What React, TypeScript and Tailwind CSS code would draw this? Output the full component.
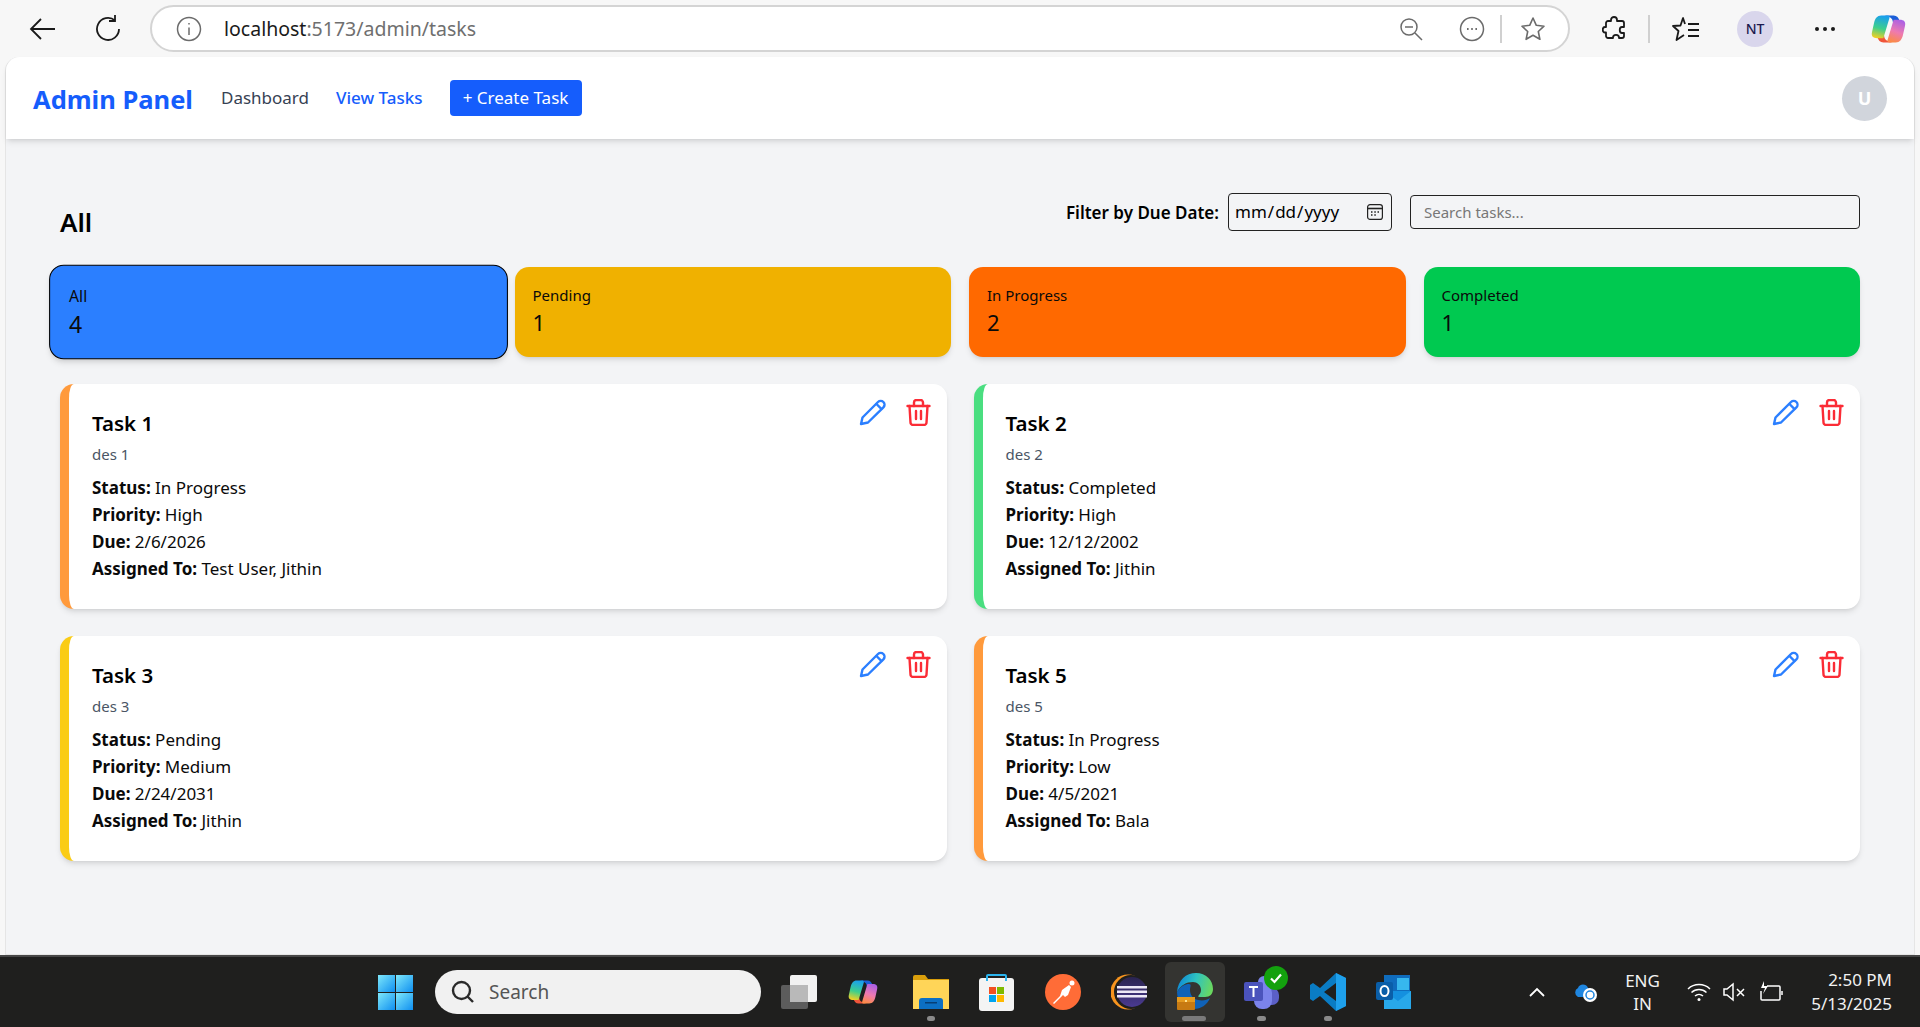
interface Task {
  id: number;
  title: string;
  description: string;
  status: string;
  priority: string;
  due: string;
  assigned: string;
  accent: string;
}

const tasks: Task[] = [
  { id: 1, title: 'Task 1', description: 'des 1', status: 'In Progress', priority: 'High', due: '2/6/2026', assigned: 'Test User, Jithin', accent: 'border-l-[#ff9a3c]' },
  { id: 2, title: 'Task 2', description: 'des 2', status: 'Completed', priority: 'High', due: '12/12/2002', assigned: 'Jithin', accent: 'border-l-[#4ade80]' },
  { id: 3, title: 'Task 3', description: 'des 3', status: 'Pending', priority: 'Medium', due: '2/24/2031', assigned: 'Jithin', accent: 'border-l-[#facc15]' },
  { id: 5, title: 'Task 5', description: 'des 5', status: 'In Progress', priority: 'Low', due: '4/5/2021', assigned: 'Bala', accent: 'border-l-[#ff9a3c]' },
];

const stats = [
  { label: 'All', count: 4, color: 'bg-[#2b7fff]', active: true },
  { label: 'Pending', count: 1, color: 'bg-[#f0b100]', active: false },
  { label: 'In Progress', count: 2, color: 'bg-[#ff6900]', active: false },
  { label: 'Completed', count: 1, color: 'bg-[#00c950]', active: false },
];

function CopilotIcon({ className, id }: { className: string; id: string }) {
  return (
    <svg className={className} viewBox="0 0 34 32">
      <defs>
        <linearGradient id={`${id}A`} x1="0.5" y1="0" x2="0.3" y2="1">
          <stop offset="0" stopColor="#1aa0ec" />
          <stop offset="0.55" stopColor="#3dcf8c" />
          <stop offset="1" stopColor="#f6d020" />
        </linearGradient>
        <linearGradient id={`${id}B`} x1="0.7" y1="0" x2="0.4" y2="1">
          <stop offset="0" stopColor="#a95fe6" />
          <stop offset="0.55" stopColor="#ee7ab0" />
          <stop offset="1" stopColor="#fb8a4a" />
        </linearGradient>
      </defs>
      <path d="M13 3H22C25 3 27 5 28 9L29 13H22L21 8C20.500 6 19 4 13 3Z" fill="#1a5fd8" />
      <path d="M21 29H12C9 29 7 27 6 23L5 19H12L13 24C13.500 26 15 28 21 29Z" fill="#f0553a" />
      <path d="M10 3C6 3 4 6 3 10L1 19C0 23 2 25 6 25H12L18 5C18.500 3.500 17 3 16 3Z" fill={`url(#${id}A)`} />
      <path d="M24 29C28 29 30 26 31 22L33 13C34 9 32 7 28 7H22L16 27C15.500 28.500 17 29 18 29Z" fill={`url(#${id}B)`} />
    </svg>
  );
}

function PencilIcon() {
  return (
    <svg className="w-[27px] h-[27px]" viewBox="0 0 27 27" fill="none" stroke="#2b7fff" strokeWidth="2.4" strokeLinejoin="round" strokeLinecap="round">
      <path d="M2 25l1.500-6.500L19 3a3.800 3.800 0 0 1 5.400 5.400L9 23.500z" />
      <path d="M17.500 5l4.800 4.800" />
    </svg>
  );
}

function TrashIcon() {
  return (
    <svg className="w-[25px] h-[27px]" viewBox="0 0 25 27" fill="none" stroke="#fb2c36" strokeWidth="2.4" strokeLinecap="round" strokeLinejoin="round">
      <path d="M1.500 7h22" />
      <path d="M8 7V3.500A2.500 2.500 0 0 1 10.500 1h4A2.500 2.500 0 0 1 17 3.500V7" />
      <path d="M3.500 7l1 16.500A2.500 2.500 0 0 0 7 26h11a2.500 2.500 0 0 0 2.500-2.500l1-16.500" />
      <path d="M10 12v8M15 12v8" />
    </svg>
  );
}

function BrowserBar() {
  return (
    <div className="h-[57px] shrink-0 bg-[#f7f7f7] flex items-center text-[#1a1a1a]">
      <svg className="ml-[28px] w-[28px] h-[28px]" viewBox="0 0 28 28" fill="none" stroke="#1a1a1a" strokeWidth="1.8">
        <path d="M27 14H3M13 4L3 14l10 10" />
      </svg>
      <svg className="ml-[38px] w-[28px] h-[28px]" viewBox="0 0 28 28" fill="none" stroke="#1a1a1a" strokeWidth="1.8">
        <path d="M21 5.500A11 11 0 1 0 25 14" />
        <path d="M21 0v6h-6" />
      </svg>
      <div className="ml-[28px] w-[1420px] h-[47px] rounded-full bg-white border-2 border-[#d4d4d4] flex items-center">
        <svg className="ml-[24px] w-[26px] h-[26px]" viewBox="0 0 26 26" fill="none" stroke="#6b6b6b" strokeWidth="1.5">
          <circle cx="13" cy="13" r="11.500" />
          <path d="M13 11.500V19" />
          <path d="M13 7v1.600" />
        </svg>
        <span className="ml-[22px] text-[19.5px] leading-none">
          localhost<span className="text-[#6f6f6f]">:5173/admin/tasks</span>
        </span>
        <svg className="ml-auto w-[24px] h-[24px]" viewBox="0 0 24 24" fill="none" stroke="#6b6b6b" strokeWidth="1.5">
          <circle cx="10" cy="10" r="8" />
          <path d="M6 10h8M16 16l7 7" />
        </svg>
        <svg className="ml-[36px] w-[26px] h-[26px]" viewBox="0 0 26 26" fill="none" stroke="#6b6b6b" strokeWidth="1.5">
          <circle cx="13" cy="13" r="11.500" />
          <path d="M8 13h1.600M12.200 13h1.600M16.400 13h1.600" strokeWidth="2" />
        </svg>
        <div className="ml-[15px] w-[2px] h-[28px] bg-[#d0d0d0]" />
        <svg className="ml-[18px] mr-[22px] w-[26px] h-[26px]" viewBox="0 0 26 26" fill="none" stroke="#6b6b6b" strokeWidth="1.6" strokeLinejoin="round">
          <path d="M13 2l3.300 7.300 7.700.9-5.700 5.300 1.600 7.800L13 19.300l-6.900 4 1.600-7.800L2 10.200l7.700-.9z" />
        </svg>
      </div>
      <svg className="ml-[32px] w-[24px] h-[28px]" viewBox="0 0 24 28" fill="none" stroke="#1a1a1a" strokeWidth="1.8" strokeLinejoin="round">
        <path d="M9 5c0-4 6-4 6 0v1h5a2 2 0 0 1 2 2v4h-2c-3 0-3 6 0 6h2v3a2 2 0 0 1-2 2h-3v-.5c0-3.500-6-3.500-6 0v.5H6a2 2 0 0 1-2-2v-3.500H3c-3 0-3-5.500 0-5.500h1V8a2 2 0 0 1 2-2h3z" />
      </svg>
      <div className="ml-[22px] w-[2px] h-[28px] bg-[#d0d0d0]" />
      <svg className="ml-[22px] w-[28px] h-[28px]" viewBox="0 0 28 28" fill="none" stroke="#1a1a1a" strokeWidth="1.8" strokeLinejoin="round">
        <path d="M13 9L11 3 8.500 10.500 1 11l5.500 5L4.500 25l7.500-5" />
        <path d="M16 9h11M16 15h11M16 21h11" />
      </svg>
      <div className="ml-[37px] w-[36px] h-[36px] rounded-full bg-[#d9d6ec] flex items-center justify-center text-[14px] font-medium text-[#1c1a4f]">
        NT
      </div>
      <div className="ml-[42px] flex gap-[4px]">
        <div className="w-[4px] h-[4px] rounded-full bg-[#1a1a1a]" />
        <div className="w-[4px] h-[4px] rounded-full bg-[#1a1a1a]" />
        <div className="w-[4px] h-[4px] rounded-full bg-[#1a1a1a]" />
      </div>
      <CopilotIcon id="cpTop" className="ml-[36px] w-[35px] h-[34px]" />
    </div>
  );
}

function Navbar() {
  return (
    <nav className="h-[82px] shrink-0 bg-white rounded-t-[14px] shadow-md flex items-center px-[27px]">
      <span className="text-[25.5px] font-bold text-[#155dfc] leading-none mt-[3px]">Admin Panel</span>
      <span className="ml-[28px] text-[17px] text-[#364153]">Dashboard</span>
      <span className="ml-[27px] text-[17px] font-medium text-[#155dfc]">View Tasks</span>
      <button className="ml-[27px] h-[36px] w-[132px] rounded bg-[#155dfc] text-white text-[17px] flex items-center justify-center">
        + Create Task
      </button>
      <div className="ml-auto w-[45px] h-[45px] rounded-full bg-[#d1d5dc] text-white font-bold text-[18px] flex items-center justify-center">
        U
      </div>
    </nav>
  );
}

function TaskCard({ task }: { task: Task }) {
  return (
    <div className={`relative h-[225px] bg-white rounded-[14px] shadow-md border-l-[9px] pl-[23px] pt-[23px] ${task.accent}`}>
      <div className="absolute top-[15px] right-[16px] flex gap-[20px]">
        <PencilIcon />
        <TrashIcon />
      </div>
      <h3 className="text-[20.5px] leading-[32px] font-semibold text-black">{task.title}</h3>
      <p className="mt-[4px] text-[15px] leading-[22px] text-[#4a5565]">{task.description}</p>
      <div className="mt-[9px] text-[17px] leading-[27px] text-[#0a0a0a]">
        <p><strong className="font-bold">Status:</strong> {task.status}</p>
        <p><strong className="font-bold">Priority:</strong> {task.priority}</p>
        <p><strong className="font-bold">Due:</strong> {task.due}</p>
        <p><strong className="font-bold">Assigned To:</strong> {task.assigned}</p>
      </div>
    </div>
  );
}

function Taskbar() {
  return (
    <div className="h-[72px] shrink-0 bg-[#1f1f1e] border-t-2 border-[#474747] flex items-center text-white">
      <svg className="ml-[378px] w-[35px] h-[35px]" viewBox="0 0 35 35">
        <defs>
          <linearGradient id="winG" x1="0" y1="0" x2="1" y2="1">
            <stop offset="0" stopColor="#7ee8fb" />
            <stop offset="1" stopColor="#0f8ff0" />
          </linearGradient>
        </defs>
        <rect x="0" y="0" width="17" height="17" fill="url(#winG)" />
        <rect x="18" y="0" width="17" height="17" fill="url(#winG)" />
        <rect x="0" y="18" width="17" height="17" fill="url(#winG)" />
        <rect x="18" y="18" width="17" height="17" fill="url(#winG)" />
      </svg>
      <div className="ml-[22px] w-[326px] h-[44px] rounded-full bg-[#f1f1f1] flex items-center">
        <svg className="ml-[16px] w-[24px] h-[24px]" viewBox="0 0 24 24" fill="none" stroke="#2a2a2a" strokeWidth="2.400">
          <circle cx="10.500" cy="10.500" r="8.500" />
          <path d="M16.500 16.500L22 22" />
        </svg>
        <span className="ml-[14px] text-[19px] text-[#555]">Search</span>
      </div>
      <svg className="ml-[20px] w-[36px] h-[34px]" viewBox="0 0 36 34">
        <rect x="0" y="10" width="27" height="24" rx="2" fill="#5c5c5c" />
        <rect x="9" y="0" width="27" height="27" rx="2" fill="#f2f2f2" />
        <rect x="9" y="10" width="18" height="17" fill="#b9b9b9" />
      </svg>
      <CopilotIcon id="cpBar" className="ml-[31px] w-[30px] h-[32px]" />
      <div className="ml-[35px] relative w-[36px] h-[34px]">
        <svg className="w-[36px] h-[34px]" viewBox="0 0 36 34">
          <path d="M0 2a2 2 0 0 1 2-2h10l3 4h21v30H0z" fill="#d99e0b" />
          <rect x="0" y="5" width="36" height="29" fill="#ffd558" />
          <path d="M6 34v-8a3 3 0 0 1 3-3h18a3 3 0 0 1 3 3v8z" fill="#0c6fc4" />
          <rect x="12" y="27" width="12" height="1.500" fill="#063e75" />
        </svg>
        <div className="absolute -bottom-[12px] left-[14px] w-[8px] h-[5px] rounded-full bg-[#8a8a8a]" />
      </div>
      <svg className="ml-[30px] w-[35px] h-[37px]" viewBox="0 0 35 37">
        <rect x="0" y="4" width="35" height="33" rx="3" fill="#f4f4f4" />
        <path d="M8 7V2a1 1 0 0 1 1-1h17a1 1 0 0 1 1 1v5" fill="none" stroke="#2bb4ee" strokeWidth="2" />
        <rect x="10" y="13" width="7" height="7" fill="#f25022" />
        <rect x="18" y="13" width="7" height="7" fill="#7fba00" />
        <rect x="10" y="21" width="7" height="7" fill="#00a4ef" />
        <rect x="18" y="21" width="7" height="7" fill="#ffb900" />
      </svg>
      <svg className="ml-[31px] w-[36px] h-[36px]" viewBox="0 0 36 36">
        <circle cx="18" cy="18" r="18" fill="#ff6c37" />
        <circle cx="27" cy="9" r="2.500" fill="#fff" />
        <path d="M8 29l7-7 2-6 7-5 2 2-3 8-3 2-2-2-9 9z" fill="#fff" />
      </svg>
      <svg className="ml-[30px] w-[36px] h-[36px]" viewBox="0 0 36 36">
        <defs>
          <linearGradient id="eclG" x1="0" y1="0" x2="0" y2="1">
            <stop offset="0" stopColor="#2a2450" />
            <stop offset="1" stopColor="#4a3a90" />
          </linearGradient>
        </defs>
        <circle cx="17" cy="18" r="17.500" fill="#f7941e" />
        <circle cx="20" cy="18" r="17" fill="#1f1f1e" />
        <circle cx="21" cy="18" r="15" fill="url(#eclG)" />
        <rect x="6" y="12" width="30" height="2.500" fill="#ece8f6" />
        <rect x="6" y="16.500" width="30" height="2.500" fill="#ece8f6" />
        <rect x="6" y="21" width="30" height="2.500" fill="#ece8f6" />
      </svg>
      <div className="ml-[18px] w-[60px] h-[60px] rounded-[6px] bg-[#343431] relative flex items-center justify-center">
        <svg className="w-[36px] h-[38px]" viewBox="0 0 36 38">
          <defs>
            <linearGradient id="edgeG" x1="0" y1="0.300" x2="1" y2="0.500">
              <stop offset="0" stopColor="#0c86d8" />
              <stop offset="0.500" stopColor="#2fc3c0" />
              <stop offset="1" stopColor="#6ad85f" />
            </linearGradient>
          </defs>
          <path d="M0 19c4-6 8-8 12-8 3 0 1 3 1 6 0 5 3 9 8 10 5 1 9 0 12-2-3 7-9 11-16 11C8 36 0 30 0 19z" fill="#0f62b8" />
          <path d="M0 19C1 7 9 0 19 0c10 0 17 7 17 16 0 5-3 8-8 8h-6c-1 0-1-1 0-2 1-1 2-3 2-5 0-5-4-8-8-8C9 9 4 12 0 19z" fill="url(#edgeG)" />
          <rect x="0" y="24" width="18" height="13" rx="1" fill="#c77a12" />
          <rect x="0" y="24" width="18" height="5" fill="#e59a1f" />
          <rect x="8" y="27" width="2" height="2" fill="#ffe08a" />
        </svg>
        <div className="absolute bottom-[1px] left-[17px] w-[24px] h-[5px] rounded-full bg-[#7a7a7a]" />
      </div>
      <div className="ml-[19px] relative w-[35px] h-[34px]">
        <svg className="w-[35px] h-[34px]" viewBox="0 0 35 34">
          <circle cx="20" cy="7" r="6" fill="#7b83eb" />
          <rect x="12" y="13" width="23" height="17" rx="7" fill="#5b5fc7" />
          <rect x="10" y="10" width="18" height="24" rx="8" fill="#7b83eb" />
          <rect x="0" y="7" width="19" height="19" rx="2" fill="#4b53bc" />
          <path d="M5 11h9v2h-3.500v9H8.500v-9H5z" fill="#fff" />
        </svg>
        <div className="absolute -top-[9px] left-[20px] w-[24px] h-[24px] rounded-full bg-[#13a10e] flex items-center justify-center">
          <svg className="w-[12px] h-[12px]" viewBox="0 0 12 12" fill="none" stroke="#fff" strokeWidth="2.200">
            <path d="M1 6.500l3.500 3.500L11 2.500" />
          </svg>
        </div>
        <div className="absolute -bottom-[12px] left-[13px] w-[9px] h-[5px] rounded-full bg-[#8a8a8a]" />
      </div>
      <div className="ml-[31px] relative w-[36px] h-[38px]">
        <svg className="w-[36px] h-[38px]" viewBox="0 0 36 38">
          <path d="M26 0l10 5v28l-10 5-16-15-7 5-3-2v-14l3-2 7 5z" fill="#0a7cc4" />
          <path d="M26 0l10 5v28l-10 5z" fill="#1ea0ec" />
          <path d="M26 10L14 19l12 9z" fill="#1f1f1e" />
        </svg>
        <div className="absolute -bottom-[10px] left-[14px] w-[8px] h-[5px] rounded-full bg-[#8a8a8a]" />
      </div>
      <svg className="ml-[30px] w-[35px] h-[34px]" viewBox="0 0 35 34">
        <rect x="8" y="0" width="26" height="18" fill="#0f6cbd" />
        <rect x="21" y="3" width="12" height="12" fill="#37b7ee" />
        <path d="M8 16h27v18H8z" fill="#1490df" />
        <path d="M8 16l14 10 13-10v18H8z" fill="#28a8ea" />
        <rect x="0" y="7" width="17" height="18" rx="2" fill="#0a5ea8" />
        <ellipse cx="8.500" cy="16" rx="4" ry="5" fill="none" stroke="#fff" strokeWidth="2" />
      </svg>
      <svg className="ml-[118px] w-[16px] h-[10px]" viewBox="0 0 16 10" fill="none" stroke="#fff" strokeWidth="1.800">
        <path d="M1 9l7-7 7 7" />
      </svg>
      <svg className="ml-[28px] w-[24px] h-[20px]" viewBox="0 0 24 20">
        <path d="M5 15a5 5 0 0 1 0-9c1-4 8-5 10 0 3 0 4 2 4 4l-3 5z" fill="#1f86e0" />
        <circle cx="17" cy="13" r="7" fill="#fff" />
        <circle cx="17" cy="13" r="4" fill="none" stroke="#1f86e0" strokeWidth="1.500" />
      </svg>
      <div className="ml-[28px] w-[35px] text-center text-[17px] leading-[23px] text-[#f2f2f2]">
        <div>ENG</div>
        <div>IN</div>
      </div>
      <svg className="ml-[27px] w-[24px] h-[20px]" viewBox="0 0 24 20" fill="none" stroke="#fff" strokeWidth="1.500">
        <path d="M1 7a16 16 0 0 1 22 0M4.500 10.500a11 11 0 0 1 15 0M8 14a6 6 0 0 1 8 0" />
        <circle cx="12" cy="17.500" r="1.500" fill="#fff" stroke="none" />
      </svg>
      <svg className="ml-[12px] w-[23px] h-[20px]" viewBox="0 0 23 20" fill="none" stroke="#fff" strokeWidth="1.500">
        <path d="M1 7v6h3l6 5V2L4 7z" />
        <path d="M14 7l7 7M21 7l-7 7" />
      </svg>
      <svg className="ml-[13px] w-[24px] h-[22px]" viewBox="0 0 24 22" fill="none" stroke="#fff" strokeWidth="1.500">
        <path d="M8 5h12a1 1 0 0 1 1 1v12a1 1 0 0 1-1 1H3a1 1 0 0 1-1-1v-8" />
        <path d="M23 10v4" />
        <path d="M5 0L2 7h4l-2 6 5-8H5z" fill="#fff" stroke="none" />
      </svg>
      <div className="ml-auto mr-[28px] text-right text-[17px] leading-[24px] text-[#f2f2f2]">
        <div>2:50 PM</div>
        <div>5/13/2025</div>
      </div>
    </div>
  );
}

export default function App() {
  return (
    <div className="h-screen flex flex-col overflow-hidden bg-[#f7f7f7] font-['Noto_Sans',sans-serif]">
      <BrowserBar />
      <div className="flex-1 min-h-0 mx-[5px] flex flex-col bg-[#f3f4f6] border-x border-b border-[#e5e5e5] rounded-t-[14px]">
        <Navbar />
        <main className="px-[54px] pt-[54px]">
          <div className="flex items-start h-[47px]">
            <h2 className="mt-[10px] text-[26px] leading-[38px] font-semibold text-black">All</h2>
            <label className="ml-auto mt-[7px] text-[17px] font-semibold text-black">Filter by Due Date:</label>
            <div className="ml-[9px] relative w-[164px] h-[38px]">
              <input
                type="date"
                className="w-full h-full px-[5px] rounded border border-[#222] text-[17px] text-black bg-transparent [&::-webkit-calendar-picker-indicator]:opacity-0"
              />
              <svg className="absolute right-[9px] top-[11px] w-[16px] h-[16px]" viewBox="0 0 16 16" fill="none" stroke="#222" strokeWidth="1.200">
                <rect x="0.600" y="0.600" width="14.800" height="14.800" rx="2.500" />
                <path d="M1 4.500h14" strokeWidth="1.600" />
                <path d="M4 8h1.500M7.300 8h1.500M10.500 8h1.500M4 11h1.500M7.300 11h1.500" strokeWidth="1.500" />
              </svg>
            </div>
            <input
              type="text"
              placeholder="Search tasks..."
              className="ml-[18px] mt-[2px] w-[450px] h-[34px] px-[13px] rounded border border-[#222] text-[15px] bg-transparent placeholder:text-[#777]"
            />
          </div>
          <div className="mt-[27px] grid grid-cols-4 gap-[18px]">
            {stats.map((s) => (
              <div
                key={s.label}
                className={`h-[90px] rounded-[14px] shadow-md px-[18px] pt-[17px] text-[#0a0a0a] ${s.color} ${s.active ? 'scale-[1.05] border border-black' : ''}`}
              >
                <p className="text-[15px] leading-[22px]">{s.label}</p>
                <p className="text-[22px] leading-[28px] mt-[2px]">{s.count}</p>
              </div>
            ))}
          </div>
          <div className="mt-[27px] grid grid-cols-2 gap-[27px]">
            {tasks.map((t) => (
              <TaskCard key={t.id} task={t} />
            ))}
          </div>
        </main>
      </div>
      <Taskbar />
    </div>
  );
}
